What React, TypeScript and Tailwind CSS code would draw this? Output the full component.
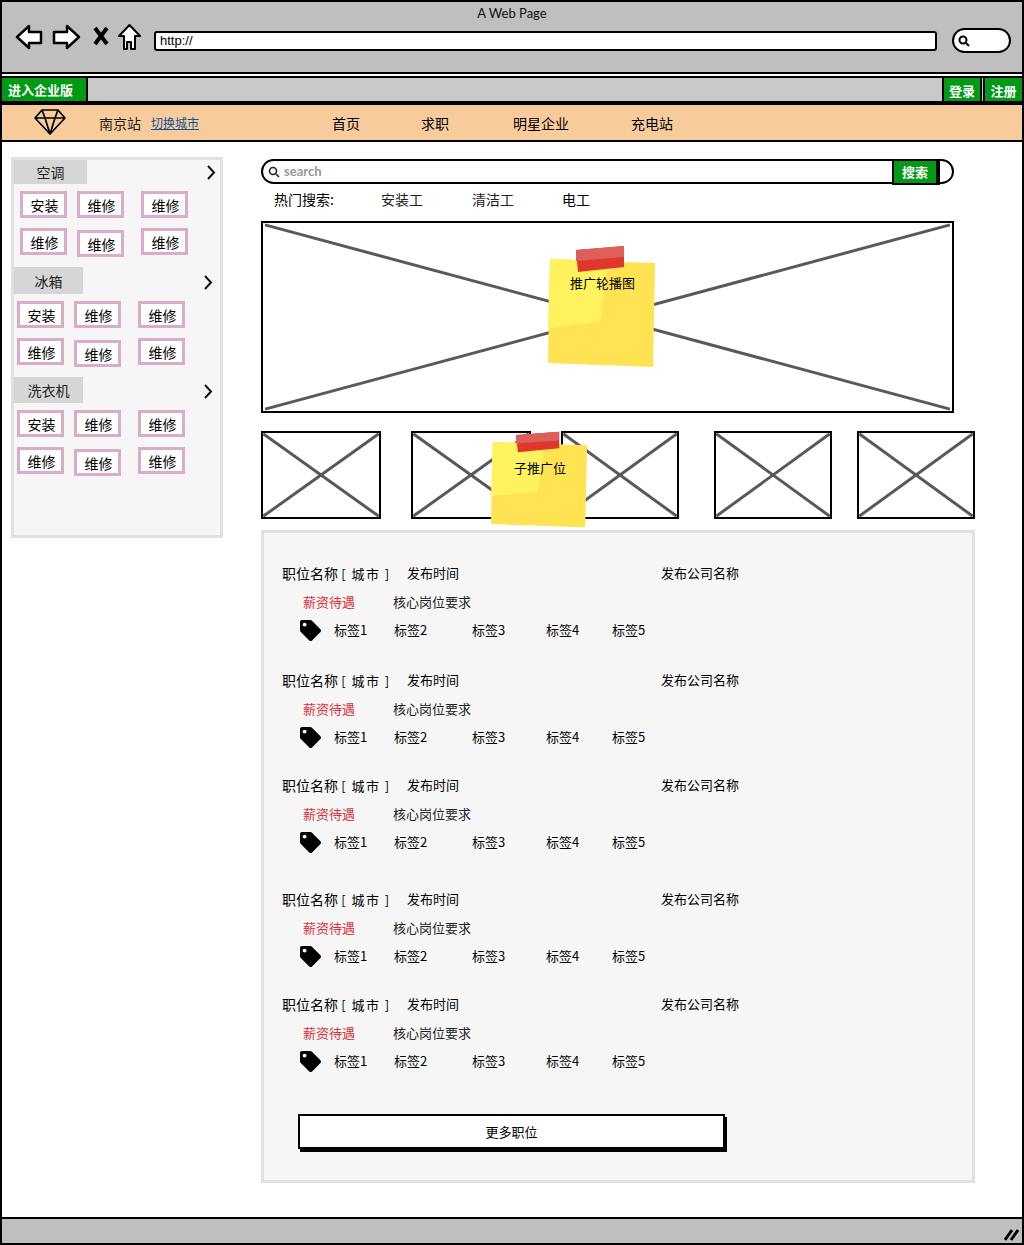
import { FaTag } from "react-icons/fa"

const cjk = "font-['Noto_Sans_CJK_SC','Liberation_Sans',sans-serif]"

function Cross({ className }: { className: string }) {
  return (
    <div className={`border-2 border-black bg-white ${className}`}>
      <svg className="block w-full h-full" viewBox="0 0 100 100" preserveAspectRatio="none">
        <line x1="0.3" y1="1" x2="99.7" y2="99" stroke="#595959" strokeWidth="3" vectorEffect="non-scaling-stroke" />
        <line x1="99.7" y1="1" x2="0.3" y2="99" stroke="#595959" strokeWidth="3" vectorEffect="non-scaling-stroke" />
      </svg>
    </div>
  )
}

function Sticky({ className, label, labelClass }: { className: string; label: string; labelClass: string }) {
  return (
    <div className={`absolute ${className}`}>
      <svg className="block w-full h-full" viewBox="0 0 107 123" preserveAspectRatio="none">
        <polygon points="2,14 107,18 105,122 0,118" fill="#ffe352" />
        <polygon points="2,14 60,16 52,77 0,83" fill="#fff25f" />
        <polygon points="28,5 76,1 76,22 30,27" fill="#e1362b" />
        <polygon points="28,5 76,1 76,12 28,16" fill="#dc5f59" />
      </svg>
      <span className={`absolute text-[13px] leading-5 text-black whitespace-nowrap ${labelClass}`}>{label}</span>
    </div>
  )
}

function Chevron({ className }: { className: string }) {
  return (
    <svg className={`absolute ${className}`} width="10" height="15" viewBox="0 0 10 15">
      <polyline points="2,1 8,7.5 2,14" fill="none" stroke="#111" strokeWidth="2" />
    </svg>
  )
}

function Chip({ text, className = "" }: { text: string; className?: string }) {
  return (
    <div className={`w-[47px] h-[27px] border-[3px] border-[#dcacc6] bg-white flex items-center justify-center pl-[2px] text-sm text-black ${className}`}>
      {text}
    </div>
  )
}

function ChipRows({ first, pad }: { first: string; pad: string }) {
  return (
    <div className={pad}>
      <div className="flex mt-[7px]">
        <Chip text={first} />
        <Chip text="维修" className="ml-[10px]" />
        <Chip text="维修" className="ml-[17px]" />
      </div>
      <div className="flex mt-[10px]">
        <Chip text="维修" />
        <Chip text="维修" className="ml-[10px] mt-[2px]" />
        <Chip text="维修" className="ml-[17px]" />
      </div>
    </div>
  )
}

const jobs = ["mt-[30px]", "mt-[30px]", "mt-[28px]", "mt-[37px]", "mt-[28px]"]

function Job({ className }: { className: string }) {
  return (
    <div className={className}>
      <div className="flex items-center h-5 text-black">
        <span className="w-[125px] text-sm whitespace-nowrap">职位名称 <span className="text-[13px] tracking-[1.5px]">[ 城市 ]</span></span>
        <span className="w-[254px] text-[13px]">发布时间</span>
        <span className="text-[13px]">发布公司名称</span>
      </div>
      <div className="flex items-center h-5 mt-[9px] ml-[21px] text-[13px]">
        <span className="w-[90px] text-[#dc2f3a]">薪资待遇</span>
        <span className="text-[#222]">核心岗位要求</span>
      </div>
      <div className="flex items-center h-5 mt-2 ml-[18px] text-[13px] text-black">
        <FaTag className="w-[21px] h-[21px] mr-[13px]" />
        <span className="w-[60px]">标签1</span>
        <span className="w-[78px]">标签2</span>
        <span className="w-[74px]">标签3</span>
        <span className="w-[66px]">标签4</span>
        <span>标签5</span>
      </div>
    </div>
  )
}

export default function App() {
  return (
    <div className={`relative w-[1024px] h-[1245px] border-2 border-black bg-white flex flex-col overflow-hidden ${cjk}`}>
      {/* browser chrome */}
      <div className="relative h-[72px] shrink-0 border-b-2 border-black bg-[#bfbfbf]">
        <div className="text-center text-[13px] leading-4 pt-[3px] text-[#111] font-['Lato',sans-serif]">A Web Page</div>
        <div className="flex items-start mt-[3px] pl-[13px]">
          <svg width="28" height="26" viewBox="0 0 28 26">
            <path d="M2 13 L14 2 V8 H26 V19 H14 V24 Z" fill="#fff" stroke="#000" strokeWidth="2.5" strokeLinejoin="round" />
          </svg>
          <svg className="ml-[9px]" width="29" height="26" viewBox="0 0 29 26">
            <path d="M27 13 L15 2 V8 H2 V19 H15 V24 Z" fill="#fff" stroke="#000" strokeWidth="2.5" strokeLinejoin="round" />
          </svg>
          <svg className="ml-[12px] mt-[2px]" width="16" height="20" viewBox="0 0 16 20">
            <path d="M2 2 L14 18 M14 2 L2 18" fill="none" stroke="#000" strokeWidth="4" />
          </svg>
          <svg className="ml-[9px] -mt-[1px]" width="23" height="28" viewBox="0 0 23 28">
            <path d="M11.5 2 L22 13 H17 V26 H13 V19 H9 V26 H6 V13 H1 Z" fill="#fff" stroke="#000" strokeWidth="2" strokeLinejoin="round" />
          </svg>
          <div className="ml-[13px] mt-[7px] w-[783px] h-[20px] border-2 border-black rounded-[3px] bg-white flex items-center pl-[4px] text-[13px] text-black font-['Liberation_Sans',sans-serif]">http://</div>
          <div className="ml-[15px] mt-[4px] w-[59px] h-[25px] border-2 border-black rounded-full bg-white flex items-center pl-[4px]">
            <svg width="12" height="12" viewBox="0 0 12 12">
              <circle cx="5" cy="5" r="3.5" fill="none" stroke="#000" strokeWidth="2" />
              <path d="M8 8 L11 11" stroke="#000" strokeWidth="2" />
            </svg>
          </div>
        </div>
      </div>
      <div className="h-[2px] shrink-0 bg-white" />
      {/* top strip */}
      <div className="h-[27px] shrink-0 border-y-2 border-black bg-[#c9c9c9] flex justify-between">
        <div className="w-[86px] border-r-2 border-black bg-[#009a17] flex items-center pl-[6px] text-[13px] font-bold text-white">进入企业版</div>
        <div className="flex">
          <div className="w-[40px] border-2 border-y-0 border-black bg-[#009a17] flex items-center justify-center text-[13px] font-bold text-white pt-[3px]">登录</div>
          <div className="ml-[1px] w-[39px] border-l-2 border-black bg-[#009a17] flex items-center justify-center text-[13px] font-bold text-white pt-[3px]">注册</div>
        </div>
      </div>
      {/* nav */}
      <div className="h-[39px] shrink-0 border-y-2 border-black bg-[#f8cb9c] flex items-center text-sm text-black">
        <svg className="ml-[31px] -mt-[2px]" width="34" height="28" viewBox="0 0 34 28">
          <path d="M9 2 H25 L32 10 L17 26 L2 10 Z M2 10 H32 M9 2 L12 10 L17 26 L22 10 L25 2" fill="none" stroke="#000" strokeWidth="1.7" strokeLinejoin="round" />
        </svg>
        <span className="ml-[32px] w-[52px] text-[#222]">南京站</span>
        <span className="w-[181px] text-xs text-[#0b5394] underline">切换城市</span>
        <span className="w-[89px]">首页</span>
        <span className="w-[92px]">求职</span>
        <span className="w-[118px]">明星企业</span>
        <span>充电站</span>
      </div>
      {/* page body */}
      <div className="flex-1 flex items-start min-h-0">
        <div className="relative ml-[9px] mt-[15px] w-[212px] h-[381px] shrink-0 border-[3px] border-[#e0e0e0] bg-[#f6f6f6] text-sm text-[#222]">
          <div className="w-[73px] h-[24px] bg-[#d6d6d6] flex items-center justify-center">空调</div>
          <Chevron className="left-[192px] top-[5px]" />
          <ChipRows first="安装" pad="pl-[6px]" />
          <div className="w-[69px] h-[27px] mt-[10px] bg-[#d6d6d6] flex items-center justify-center">冰箱</div>
          <Chevron className="left-[189px] top-[115px]" />
          <ChipRows first="安装" pad="pl-[3px]" />
          <div className="w-[69px] h-[26px] mt-[10px] bg-[#d6d6d6] flex items-center justify-center">洗衣机</div>
          <Chevron className="left-[189px] top-[224px]" />
          <ChipRows first="安装" pad="pl-[3px]" />
        </div>

        <div className="ml-[38px] mt-[17px] w-[714px] shrink-0">
          <div className="relative w-[693px] h-[25px] border-2 border-black rounded-full bg-white flex items-center pl-[5px]">
            <svg width="12" height="12" viewBox="0 0 12 12">
              <circle cx="5" cy="5" r="3.5" fill="none" stroke="#222" strokeWidth="1.6" />
              <path d="M8 8 L11 11" stroke="#222" strokeWidth="1.6" />
            </svg>
            <span className="ml-[4px] text-[13px] font-bold text-[#999] font-['Lato',sans-serif]">search</span>
            <div className="absolute left-[629px] -top-[2px] w-[48px] h-[26px] bg-[#009a17] border-2 border-r-4 border-black flex items-center justify-center text-[13px] font-bold text-white">搜索</div>
          </div>
          <div className="h-[37px] flex items-center pl-[13px] pb-2 text-sm text-black">
            <span className="w-[107px]">热门搜索:</span>
            <span className="w-[91px] text-[#222]">安装工</span>
            <span className="w-[90px] text-[#222]">清洁工</span>
            <span>电工</span>
          </div>
          <div className="relative w-[693px] h-[192px]">
            <Cross className="w-full h-full" />
            <Sticky className="left-[287px] top-[24px] w-[107px] h-[123px]" label="推广轮播图" labelClass="left-[22px] top-[28px]" />
          </div>
          <div className="relative flex mt-[18px] h-[88px]">
            <Cross className="w-[120px] h-full" />
            <Cross className="ml-[30px] w-[120px] h-full" />
            <Cross className="ml-[30px] w-[118px] h-full" />
            <Cross className="ml-[35px] w-[118px] h-full" />
            <Cross className="ml-[25px] w-[118px] h-full" />
            <Sticky className="left-[230px] top-0 w-[96px] h-[97px]" label="子推广位" labelClass="left-[23px] top-[27px]" />
          </div>
          <div className="mt-[11px] h-[653px] border-[3px] border-[#e0e0e0] bg-[#f6f6f6] pl-[18px]">
            {jobs.map((margin, index) => (
              <Job key={index} className={margin} />
            ))}
            <div className="mt-[43px] ml-[16px] w-[427px] h-[35px] border-2 border-black bg-white shadow-[2px_3px_0_#000] flex items-center justify-center text-[13px] text-black">
              更多职位
            </div>
          </div>
        </div>
      </div>
      {/* status bar */}
      <div className="relative h-[26px] shrink-0 border-t-2 border-black bg-[#bfbfbf]">
        <svg className="absolute right-[2px] bottom-[2px]" width="16" height="14" viewBox="0 0 16 14">
          <path d="M1 13 L8 3 M7 13 L14 3" stroke="#000" strokeWidth="3" />
        </svg>
      </div>
    </div>
  )
}
